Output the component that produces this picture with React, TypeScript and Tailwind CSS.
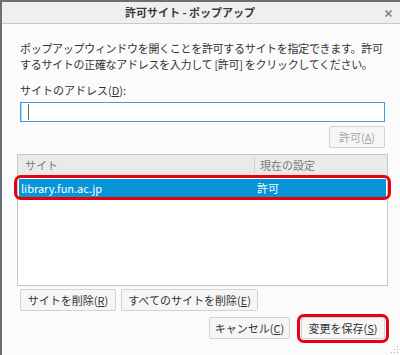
import React from "react";

const font = { fontFamily: '"Noto Sans CJK JP", "Noto Sans", sans-serif' };

function Btn({ children, className = "", disabled = false }: { children: React.ReactNode; className?: string; disabled?: boolean }) {
  return (
    <div
      className={`flex items-center justify-center border border-[#d2d2d2] bg-[#f6f6f6] rounded-[2px] text-[11px] ${disabled ? "text-[#a6a6a6]" : "text-[#333333]"} ${className}`}
    >
      {children}
    </div>
  );
}

export default function App() {
  return (
    <div className="w-[400px] h-[355px] bg-[#6f6f6f] pl-[2px] pt-[2px] overflow-hidden" style={font}>
      <div className="relative w-[398px] h-[353px] bg-[#fbfbfb] flex flex-col">
        {/* title bar */}
        <div className="h-[22px] shrink-0 bg-[#efefef] border-b border-[#c9c9c9] relative flex items-center justify-center">
          <span className="text-[11px] font-bold text-[#3a3a3a] ml-[-22px]">許可サイト - ポップアップ</span>
          <svg className="absolute right-[8px] top-[8px]" width="7" height="7" viewBox="0 0 7 7">
            <path d="M0.5 0.5 L6.5 6.5 M6.5 0.5 L0.5 6.5" stroke="#8c8c8c" strokeWidth="1.8" />
          </svg>
        </div>
        {/* body */}
        <div className="flex flex-col pl-[18px] pr-[15px] pt-[16px] text-[#333333]">
          <div className="text-[11px] leading-[16px] tracking-[-0.3px]">
            <div>ポップアップウィンドウを開くことを許可するサイトを指定できます。許可</div>
            <div>するサイトの正確なアドレスを入力して [許可] をクリックしてください。</div>
          </div>
          <div className="mt-[10px] text-[11px] leading-[16px]">
            サイトのアドレス(<span className="underline">D</span>):
          </div>
          <div className="mt-[4px] h-[20px] border border-[#3d9de3] bg-white shadow-[inset_1px_0_0_#b5dbf7] flex items-center pl-[7px]">
            <div className="w-[1px] h-[16px] bg-[#666666]" />
          </div>
          <div className="mt-[4px] flex justify-end">
            <Btn disabled className="w-[56px] h-[22px]">
              許可(<span className="underline">A</span>)
            </Btn>
          </div>
        </div>
        {/* list */}
        <div className="relative mt-[6px] ml-[15px] mr-[12px] h-[132px] border border-[#c8c8c8] bg-white">
          <div className="h-[21px] bg-[#eaeaea] flex items-center text-[11px] text-[#7a7a7a] border-b border-[#e0e0e0]">
            <div className="w-[237px] pl-[7px] border-r border-[#d0d0d0] h-[15px] flex items-center">サイト</div>
            <div className="pl-[5px]">現在の設定</div>
          </div>
          <div className="mt-[3px] mx-[1px] h-[18px] bg-[#0795d9] flex items-center text-[11px] text-white">
            <div className="w-[237px] pl-[2px]">library.fun.ac.jp</div>
            <div className="pl-[1px]">許可</div>
          </div>
          <div className="absolute left-[-4px] right-[-4px] top-[20px] h-[25px] border-[3px] border-[#e8000b] rounded-[7px]" />
        </div>
        {/* bottom buttons */}
        <div className="flex gap-[5px] ml-[18px] mt-[3px]">
          <Btn className="w-[96px] h-[22px]">
            サイトを削除(<span className="underline">R</span>)
          </Btn>
          <Btn className="w-[137px] h-[22px]">
            すべてのサイトを削除(<span className="underline">E</span>)
          </Btn>
        </div>
        <div className="flex justify-end gap-[11px] mr-[15px] mt-[6px]">
          <Btn className="w-[81px] h-[22px]">
            キャンセル(<span className="underline">C</span>)
          </Btn>
          <div className="relative">
            <Btn className="w-[84px] h-[22px]">
              変更を保存(<span className="underline">S</span>)
            </Btn>
            <div className="absolute left-[-4px] right-[-4px] top-[-3px] bottom-[-4px] border-[3px] border-[#e8000b] rounded-[7px]" />
          </div>
        </div>
        <svg className="absolute right-[1px] bottom-[1px]" width="8" height="8" viewBox="0 0 8 8">
          <rect x="6" y="0" width="1" height="1" fill="#b0b0b0" />
          <rect x="3" y="3" width="1" height="1" fill="#b0b0b0" />
          <rect x="6" y="3" width="1" height="1" fill="#b0b0b0" />
          <rect x="0" y="6" width="1" height="1" fill="#b0b0b0" />
          <rect x="3" y="6" width="1" height="1" fill="#b0b0b0" />
          <rect x="6" y="6" width="1" height="1" fill="#b0b0b0" />
        </svg>
      </div>
    </div>
  );
}
